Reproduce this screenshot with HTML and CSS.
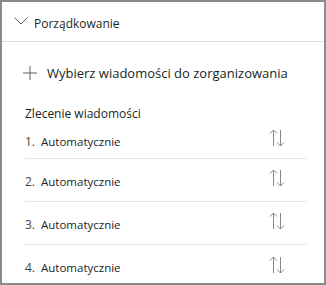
FILE: index.html
```html
<!DOCTYPE html>
<html lang="pl">
<head>
<meta charset="utf-8">
<link rel="stylesheet" href="styles.css">
</head>
<body>
<div class="panel">
  <div class="header">
    <svg class="chevron" width="14" height="8" viewBox="0 0 14 8"><path d="M0.5 0.5 L7 7 L13.5 0.5" fill="none" stroke="#605e5c" stroke-width="1"/></svg>
    <span class="header-title">Porządkowanie</span>
  </div>
  <div class="body">
    <div class="add">
      <svg class="plus" width="14" height="14" viewBox="0 0 14 14"><path d="M7 0 V14 M0 7 H14" fill="none" stroke="#605e5c" stroke-width="1"/></svg>
      <span class="add-text">Wybierz wiadomości do zorganizowania</span>
    </div>
    <div class="section-title">Zlecenie wiadomości</div>
    <ul class="list">
      <li class="row"><span class="num">1.</span><span class="label">Automatycznie</span><svg class="sort" width="16" height="18" viewBox="0 0 16 18"><path d="M4.5 1 V17 M1 4.5 L4.5 1 L8 4.5 M11.5 1 V17 M8 13.5 L11.5 17 L15 13.5" fill="none" stroke="#8a8886" stroke-width="1"/></svg></li>
      <li class="row"><span class="num">2.</span><span class="label">Automatycznie</span><svg class="sort" width="16" height="18" viewBox="0 0 16 18"><path d="M4.5 1 V17 M1 4.5 L4.5 1 L8 4.5 M11.5 1 V17 M8 13.5 L11.5 17 L15 13.5" fill="none" stroke="#8a8886" stroke-width="1"/></svg></li>
      <li class="row"><span class="num">3.</span><span class="label">Automatycznie</span><svg class="sort" width="16" height="18" viewBox="0 0 16 18"><path d="M4.5 1 V17 M1 4.5 L4.5 1 L8 4.5 M11.5 1 V17 M8 13.5 L11.5 17 L15 13.5" fill="none" stroke="#8a8886" stroke-width="1"/></svg></li>
      <li class="row"><span class="num">4.</span><span class="label">Automatycznie</span><svg class="sort" width="16" height="18" viewBox="0 0 16 18"><path d="M4.5 1 V17 M1 4.5 L4.5 1 L8 4.5 M11.5 1 V17 M8 13.5 L11.5 17 L15 13.5" fill="none" stroke="#8a8886" stroke-width="1"/></svg></li>
    </ul>
  </div>
</div>
</body>
</html>
```
FILE: styles.css
```css
* { box-sizing: border-box; }
html, body { margin: 0; padding: 0; background: #fff; }
body { font-family: "Open Sans", "Noto Sans", Arial, sans-serif; color: #201f1e; }
.panel {
  width: 326px;
  height: 285px;
  border: 2px solid #8a8a8a;
  overflow: hidden;
}
.header {
  height: 40px;
  border-bottom: 1px solid #e1dfdd;
  display: flex;
  align-items: center;
  padding-left: 12px;
  padding-top: 4px;
}
.chevron { margin-right: 6px; margin-top: -6px; }
.header-title { font-size: 12px; line-height: 16px; }
.body { padding: 0 17px 0 21px; }
.add {
  display: flex;
  align-items: center;
  height: 30px;
  margin-top: 16px;
}
.plus { margin-right: 10px; }
.add-text { font-size: 13px; line-height: 16px; letter-spacing: 0; }
.section-title {
  font-size: 12px;
  line-height: 16px;
  margin-top: 18px;
  padding-left: 2px;
}
.list { list-style: none; margin: 0; padding: 0 0 0 2px; }
.row {
  display: flex;
  align-items: center;
  height: 43px;
  border-bottom: 1px solid #e8e6e4;
  padding-top: 2px;
}
.row:first-child { height: 37px; }
.row:last-child { border-bottom: none; }
.num { font-size: 12px; color: #484644; width: 16px; }
.label { font-size: 11.5px; flex: 1; }
.sort { margin-right: 22px; margin-top: -6px; }
```
